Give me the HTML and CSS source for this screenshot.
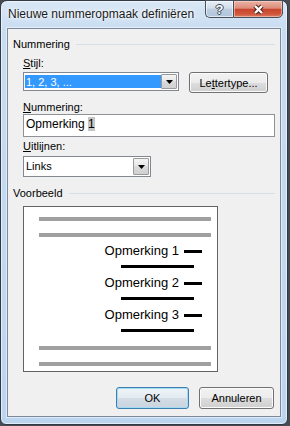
FILE: index.html
```html
<!DOCTYPE html>
<html>
<head>
  <meta charset="utf-8">
  <title>Nieuwe nummeropmaak definiëren</title>
  <link rel="stylesheet" href="styles.css">
</head>
<body>
  <div class="window">
    <div class="titlebar">
      <span class="title">Nieuwe nummeropmaak definiëren</span>
      <div class="caption">
        <span class="cap-btn help">?</span>
        <span class="cap-btn close">
          <svg width="13" height="11" viewBox="0 0 13 11">
            <path d="M3 2 L10 9 M10 2 L3 9" stroke="#4b2119" stroke-width="4.4" fill="none"/>
            <path d="M3 2 L10 9 M10 2 L3 9" stroke="#fff" stroke-width="2.4" fill="none"/>
          </svg>
        </span>
      </div>
    </div>

    <div class="client">
      <div class="group-title first">Nummering</div>
      <div class="group-body">
        <div class="label label-style"><u>S</u>tijl:</div>
        <div class="row">
          <div class="combo combo-style">
            <span class="combo-value selected">1, 2, 3, ...</span>
            <span class="drop">
              <svg width="7" height="4" viewBox="0 0 7 4"><polygon points="0,0 7,0 3.5,4" fill="#000"/></svg>
            </span>
          </div>
          <span class="button btn-font">Le<u>t</u>tertype...</span>
        </div>

        <div class="label label-num"><u>N</u>ummering:</div>
        <div class="textbox">Opmerking <span class="field">1</span></div>

        <div class="label label-align"><u>U</u>itlijnen:</div>
        <div class="combo combo-align">
          <span class="combo-value">Links</span>
          <span class="drop">
            <svg width="7" height="4" viewBox="0 0 7 4"><polygon points="0,0 7,0 3.5,4" fill="#000"/></svg>
          </span>
        </div>
      </div>

      <div class="group-title second">Voorbeeld</div>
      <div class="group-body">
        <div class="preview">
          <div class="bar"></div>
          <div class="bar bar-next"></div>

          <div class="item item-first">Opmerking 1<span class="dash"></span></div>
          <div class="rule"></div>
          <div class="item">Opmerking 2<span class="dash"></span></div>
          <div class="rule"></div>
          <div class="item">Opmerking 3<span class="dash"></span></div>
          <div class="rule"></div>

          <div class="bar bar-after"></div>
          <div class="bar bar-next"></div>
        </div>
      </div>

      <div class="actions">
        <span class="button btn-ok">OK</span>
        <span class="button btn-cancel">Annuleren</span>
      </div>
    </div>
  </div>
</body>
</html>
```

FILE: styles.css
```css
* {
  box-sizing: border-box;
}

body {
  margin: 0;
  background: #474b51;
  font-family: "Liberation Sans", Arial, sans-serif;
  font-size: 11px;
  color: #000;
}

/* window frame */

.window {
  width: 288px;
  height: 425px;
  display: flex;
  flex-direction: column;
  padding: 0 6px 7px;
  border: 1px solid #303a46;
  border-radius: 7px 7px 6px 6px;
  background: linear-gradient(to bottom, #d9e7f5 0, #c8dcf1 30px, #bcd5ef 100%);
  box-shadow: inset 0 0 0 1px rgba(255, 255, 255, 0.55);
}

.titlebar {
  height: 27px;
  display: flex;
  align-items: flex-start;
}

.title {
  flex: 1;
  margin: 6px 0 0 1px;
  font-size: 12px;
  line-height: 14px;
  color: #1b1b1b;
  white-space: nowrap;
  text-shadow: 0 0 6px #fff, 0 0 3px #fff;
}

.caption {
  display: flex;
  margin: -1px -2px 0 0;
}

.cap-btn {
  height: 18px;
  display: flex;
  align-items: center;
  justify-content: center;
  border: 1px solid #46505d;
}

.help {
  width: 28px;
  border-right: 0;
  border-radius: 0 0 0 5px;
  background: linear-gradient(to bottom, #e6eef7, #d2deeb 45%, #bdcee1 50%, #b1c5dc);
  box-shadow: inset 0 0 0 1px rgba(255, 255, 255, 0.6);
  color: #fff;
  font-size: 13px;
  font-weight: bold;
  text-shadow: 1px 0 #3a4654, -1px 0 #3a4654, 0 1px #3a4654, 0 -1px #3a4654;
}

.close {
  width: 50px;
  border-radius: 0 0 5px 0;
  background: linear-gradient(to bottom, #ebb2a4, #de8d7b 45%, #c9452d 52%, #cf553c 80%, #dc7b60);
  box-shadow: inset 0 0 0 1px rgba(255, 225, 215, 0.5);
}

/* client area */

.client {
  flex: 1;
  display: flex;
  flex-direction: column;
  padding: 0 5px 7px;
  background: #f0f0f0;
  border: 1px solid #7b8a9b;
  box-shadow: 0 0 0 1px rgba(255, 255, 255, 0.5);
}

.group-title {
  display: flex;
  align-items: center;
  line-height: 13px;
}

.group-title::after {
  content: "";
  flex: 1;
  height: 1px;
  margin: 0 0 1px 6px;
  background: #d5dfe5;
}

.first {
  margin-top: 9px;
}

.second {
  margin-top: 10px;
}

.group-body {
  padding-left: 10px;
}

.label {
  line-height: 13px;
}

.label-style {
  margin-top: 6px;
}

.label-num {
  margin-top: 8px;
}

.label-align {
  margin-top: 3px;
}

.row {
  display: flex;
  align-items: flex-start;
  margin-top: 2px;
}

/* controls */

.combo {
  display: flex;
  padding: 1px;
  background: #fff;
  border: 1px solid #828790;
}

.combo-style {
  width: 156px;
  height: 19px;
}

.combo-align {
  width: 128px;
  height: 21px;
  margin-top: 3px;
}

.combo-value {
  flex: 1;
  padding-left: 1px;
  line-height: 17px;
}

.combo-value.selected {
  margin: 1px 0;
  line-height: 14px;
  background: #3399ff;
  color: #fff;
}

.drop {
  width: 16px;
  display: flex;
  align-items: center;
  justify-content: center;
  border: 1px solid #9a9a9a;
  border-radius: 1px;
  background: linear-gradient(to bottom, #f4f4f4, #e6e6e6 50%, #dadada 50%, #d0d0d0);
}

.textbox {
  height: 23px;
  padding-left: 2px;
  font-size: 12px;
  line-height: 18px;
  background: #fff;
  border: 1px solid #8e9196;
}

.field {
  background: #c6c6c6;
}

.button {
  height: 22px;
  display: flex;
  align-items: center;
  justify-content: center;
  border: 1px solid #707070;
  border-radius: 3px;
  background: linear-gradient(to bottom, #f2f2f2, #ebebeb 50%, #dddddd 50%, #cfcfcf);
  box-shadow: inset 0 0 0 1px #fbfbfb;
}

.btn-font {
  width: 79px;
  height: 21px;
  margin-left: 10px;
}

/* preview */

.preview {
  width: 195px;
  height: 166px;
  margin-top: 6px;
  display: flex;
  flex-direction: column;
  padding: 10px 6px 5px 15px;
  background: #fff;
  border: 1px solid #646464;
}

.bar {
  height: 4px;
  background: #a0a0a0;
}

.bar-next {
  margin-top: 12px;
}

.bar-after {
  margin-top: 14px;
}

.item {
  height: 16px;
  display: flex;
  align-items: center;
  justify-content: flex-end;
  margin-top: 7px;
  padding-right: 9px;
  font-size: 13px;
  line-height: 16px;
}

.item-first {
  margin-top: 6px;
}

.dash {
  width: 18px;
  height: 3px;
  margin-left: 5px;
  background: #000;
}

.rule {
  width: 73px;
  height: 3px;
  align-self: flex-end;
  margin: 6px 17px 0 0;
  background: #000;
}

/* dialog buttons */

.actions {
  display: flex;
  justify-content: flex-end;
  gap: 10px;
  margin-top: auto;
  padding-right: 1px;
}

.btn-ok {
  width: 73px;
  border-color: #3c7fb1;
  background: linear-gradient(to bottom, #eef4f8, #e3ebf1 50%, #d4dde6 50%, #c9d4de);
  box-shadow: inset 0 0 0 1px #a6daf3;
}

.btn-cancel {
  width: 75px;
}
```
